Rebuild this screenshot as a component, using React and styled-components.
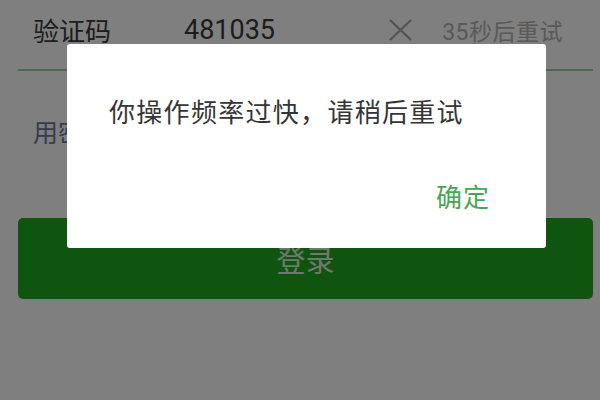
import React from "react";
import styled, { createGlobalStyle } from "styled-components";

const Global = createGlobalStyle`
  html, body { margin: 0; padding: 0; background: #ffffff; }
  body {
    width: 600px; height: 400px; overflow: hidden;
    font-family: Roboto, "Noto Sans CJK SC", "Noto Sans", sans-serif;
  }
`;

const Page = styled.div`
  width: 600px;
  height: 400px;
  box-sizing: border-box;
  padding: 0 7px 0 18px;
  display: flex;
  flex-direction: column;
`;

const Row = styled.div`
  display: flex;
  align-items: center;
  box-sizing: border-box;
  height: ${(p) => p.$h}px;
  padding: 0 30px ${(p) => p.$pb || 0}px 15px;
  border-bottom: ${(p) => (p.$line ? "2px solid #9ccf9c" : "none")};
`;

const Label = styled.span`
  width: 151px;
  font-size: 26px;
  color: #3a3a3a;
  font-family: "Noto Sans CJK SC", sans-serif;
`;

const Value = styled.span`
  flex: 1;
  font-size: 27px;
  color: #3a3a3a;
  font-family: Roboto, sans-serif;
`;

const Clear = styled.svg`
  width: 25px;
  height: 22px;
  margin-right: 29px;
`;

const Countdown = styled.span`
  font-size: 23px;
  letter-spacing: 0.5px;
  color: #b2b2b2;
  font-family: Roboto, "Noto Sans CJK SC", sans-serif;
`;

const Link = styled.span`
  font-size: 25px;
  color: #6a7a98;
  font-family: "Noto Sans CJK SC", sans-serif;
`;

const LoginButton = styled.div`
  margin-top: 27px;
  height: 81px;
  border-radius: 5px;
  background: #1eaa20;
  display: flex;
  align-items: center;
  justify-content: center;
  font-size: 29px;
  color: rgba(255, 255, 255, 0.85);
  font-family: "Noto Sans CJK SC", sans-serif;
`;

const Overlay = styled.div`
  position: fixed;
  inset: 0;
  background: rgba(0, 0, 0, 0.5);
  display: flex;
  align-items: flex-start;
  padding: 44px 0 0 67px;
`;

const Dialog = styled.div`
  width: 479px;
  height: 204px;
  box-sizing: border-box;
  background: #ffffff;
  border-radius: 3px;
  padding: 49px 56px 0 42px;
  display: flex;
  flex-direction: column;
  font-family: "Noto Sans CJK SC", sans-serif;
`;

const Message = styled.div`
  font-size: 26px;
  line-height: 36px;
  letter-spacing: 1.3px;
  color: #353535;
`;

const Actions = styled.div`
  margin-top: 49px;
  display: flex;
  justify-content: flex-end;
`;

const Confirm = styled.span`
  font-size: 26px;
  line-height: 36px;
  letter-spacing: 1px;
  color: #45a854;
`;

export default function App() {
  return (
    <>
      <Global />
      <Page>
        <Row $h={71} $pb={10} $line>
          <Label>验证码</Label>
          <Value>481035</Value>
          <Clear viewBox="0 0 25 22">
            <path d="M2 1 L23 21 M23 1 L2 21" stroke="#a8a8a8" strokeWidth="2.4" fill="none" />
          </Clear>
          <Countdown>35秒后重试</Countdown>
        </Row>
        <Row $h={120}>
          <Link>用密码登录</Link>
        </Row>
        <LoginButton>登录</LoginButton>
      </Page>
      <Overlay>
        <Dialog>
          <Message>你操作频率过快，请稍后重试</Message>
          <Actions>
            <Confirm>确定</Confirm>
          </Actions>
        </Dialog>
      </Overlay>
    </>
  );
}
